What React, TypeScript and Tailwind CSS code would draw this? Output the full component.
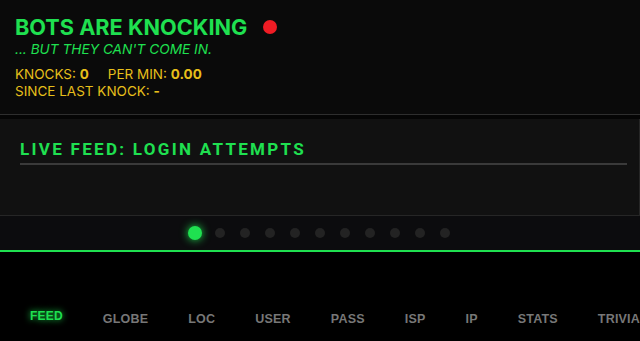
const tabs = ["FEED", "GLOBE", "LOC", "USER", "PASS", "ISP", "IP", "STATS", "TRIVIA"];

export default function App() {
    return (
        <div className="h-[341px] w-[640px] overflow-hidden bg-black font-['Inter',sans-serif]">
            {/* Header */}
            <div className="h-[115px] border-b border-[#2e2e2e] bg-[#0a0a0a] px-[15px] pt-[13px]">
                <div className="flex items-center gap-[16px]">
                    <h1 className="text-[21.7px] font-bold leading-[28px] text-[#1fe050]">BOTS ARE KNOCKING</h1>
                    <span className="h-[14px] w-[14px] rounded-full bg-[#f01c24]" />
                </div>
                <p className="text-[13.7px] italic leading-[16px] text-[#1fe050]">... BUT THEY CAN'T COME IN.</p>
                <div className="mt-[9px] text-[13.5px] leading-[17px] text-[#e6bf1a]">
                    <div>
                        KNOCKS: <span className="font-bold">0</span>
                        <span className="ml-[19px]">PER MIN: </span>
                        <span className="font-bold">0.00</span>
                    </div>
                    <div>
                        SINCE LAST KNOCK: <span className="font-bold">-</span>
                    </div>
                </div>
            </div>

            <div className="h-[4px] bg-[#050505]" />

            {/* Live feed panel */}
            <div className="h-[97px] border-b border-r border-[#262626] bg-[#111111] px-[20px] pt-[20px]">
                <h2 className="font-['Roboto',sans-serif] text-[17px] font-bold leading-[21px] tracking-[0.135em] text-[#1fe050]">
                    LIVE FEED: LOGIN ATTEMPTS
                </h2>
                <div className="mr-[-8px] mt-[3px] h-[2px] bg-[#3a3a3a]" />
            </div>

            {/* Pager dots */}
            <div className="flex h-[36px] items-center justify-center gap-[15px] border-b-2 border-[#1fe050] bg-[#0c0c0e]">
                <span className="h-[10px] w-[10px] scale-[1.4] rounded-full bg-[#1fe050] shadow-[0_0_6px_#1fe050]" />
                {Array.from({ length: 10 }).map((_, i) => (
                    <span key={i} className="h-[10px] w-[10px] rounded-full bg-[#232323]" />
                ))}
            </div>

            {/* Bottom nav */}
            <nav className="flex whitespace-nowrap pl-[10px] pt-[58px] font-['Liberation_Sans',Arial,sans-serif] text-[12.5px] font-bold tracking-[0.2px]">
                {tabs.map((t, i) => (
                    <span
                        key={t}
                        className={
                            i === 0
                                ? "-translate-y-[3px] px-[20px] text-[12px] text-[#1fe050] [text-shadow:0_0_6px_#1fe050]"
                                : "px-[20px] text-[#777777]"
                        }
                    >
                        {t}
                    </span>
                ))}
            </nav>
        </div>
    );
}
